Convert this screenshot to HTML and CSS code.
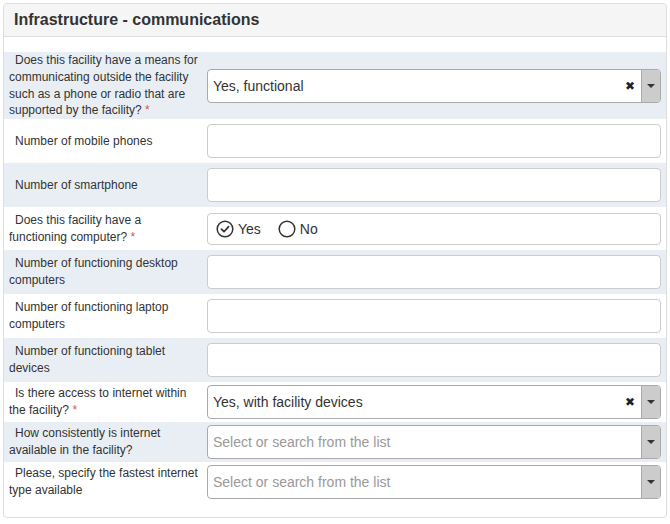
FILE: index.html
```html
<!DOCTYPE html>
<html>
<head>
<meta charset="utf-8">
<link rel="stylesheet" href="styles.css">
</head>
<body>
<div class="panel">
  <div class="panel-head">Infrastructure - communications</div>
  <div class="panel-body">
    <div class="row shaded r-tall">
      <div class="label">Does this facility have a means for communicating outside the facility such as a phone or radio that are supported by the facility? <span class="req">*</span></div>
      <div class="select">
        <span class="value">Yes, functional</span>
        <span class="clear">✖</span>
        <span class="arrow"><span class="tri"></span></span>
      </div>
    </div>
    <div class="row r-in">
      <div class="label">Number of mobile phones</div>
      <div class="input"></div>
    </div>
    <div class="row shaded r-in">
      <div class="label">Number of smartphone</div>
      <div class="input"></div>
    </div>
    <div class="row r-radio">
      <div class="label">Does this facility have a functioning computer? <span class="req">*</span></div>
      <div class="radios">
        <span class="opt">
          <svg width="18" height="18" viewBox="0 0 18 18"><circle cx="9" cy="9" r="7.8" fill="none" stroke="#333" stroke-width="1.5"/><path d="M5.4 9.2 L8 11.7 L12.6 6.6" fill="none" stroke="#333" stroke-width="1.7" stroke-linecap="round" stroke-linejoin="round"/></svg>
          Yes
        </span>
        <span class="opt">
          <svg width="18" height="18" viewBox="0 0 18 18"><circle cx="9" cy="9" r="7.8" fill="none" stroke="#333" stroke-width="1.5"/></svg>
          No
        </span>
      </div>
    </div>
    <div class="row shaded r-in">
      <div class="label">Number of functioning desktop computers</div>
      <div class="input"></div>
    </div>
    <div class="row r-in">
      <div class="label">Number of functioning laptop computers</div>
      <div class="input"></div>
    </div>
    <div class="row shaded r-in">
      <div class="label">Number of functioning tablet devices</div>
      <div class="input"></div>
    </div>
    <div class="row r-sel">
      <div class="label">Is there access to internet within the facility? <span class="req">*</span></div>
      <div class="select">
        <span class="value">Yes, with facility devices</span>
        <span class="clear">✖</span>
        <span class="arrow"><span class="tri"></span></span>
      </div>
    </div>
    <div class="row shaded r-sel">
      <div class="label">How consistently is internet available in the facility?</div>
      <div class="select">
        <span class="value ph">Select or search from the list</span>
        <span class="arrow"><span class="tri"></span></span>
      </div>
    </div>
    <div class="row r-sel">
      <div class="label">Please, specify the fastest internet type available</div>
      <div class="select">
        <span class="value ph">Select or search from the list</span>
        <span class="arrow"><span class="tri"></span></span>
      </div>
    </div>
  </div>
</div>
</body>
</html>
```

FILE: styles.css
```css
html, body {
  margin: 0;
  padding: 0;
  background: #fff;
}
body {
  font-family: "Liberation Sans", Arial, sans-serif;
  color: #333;
}
.panel {
  margin: 3px 3px 0 3px;
  width: 662px;
  border: 1px solid #ddd;
  border-radius: 4px;
  background: #fff;
}
.panel-head {
  background: #f5f5f5;
  border-bottom: 1px solid #ddd;
  border-radius: 3px 3px 0 0;
  height: 32px;
  line-height: 31px;
  padding-left: 10px;
  font-size: 16px;
  font-weight: bold;
  color: #333;
}
.panel-body {
  padding: 15px 0 15px 0;
}
.row {
  display: flex;
  align-items: center;
  padding-right: 5px;
}
.row.shaded {
  background: #e9eef5;
}
.r-tall { height: 67px; }
.r-in { height: 44px; }
.r-radio { height: 43px; }
.r-sel { height: 40px; }
.label {
  width: 189px;
  flex: none;
  padding-left: 5px;
  padding-right: 9px;
  font-size: 12px;
  line-height: 16.75px;
  text-indent: 6px;
  color: #333;
}
.req {
  color: #d9534f;
}
.input {
  flex: 1;
  height: 32px;
  border: 1px solid #ccc;
  border-radius: 4px;
  background: #fff;
}
.select {
  flex: 1;
  height: 32px;
  border: 1px solid #aaa;
  border-radius: 4px;
  background: #fff;
  display: flex;
  align-items: center;
  overflow: hidden;
}
.select .value {
  flex: 1;
  padding-left: 5px;
  font-size: 14px;
  color: #333;
}
.select .value.ph {
  color: #999;
}
.select .clear {
  font-size: 12px;
  font-weight: bold;
  color: #222;
  margin-right: 6px;
  font-family: "DejaVu Sans", sans-serif;
}
.select .arrow {
  width: 18px;
  height: 32px;
  background: #ccc;
  border-left: 1px solid #aaa;
  display: flex;
  align-items: center;
  justify-content: center;
}
.tri {
  width: 0;
  height: 0;
  border-left: 4px solid transparent;
  border-right: 4px solid transparent;
  border-top: 4px solid #333;
}
.radios {
  flex: 1;
  height: 30px;
  border: 1px solid #ccc;
  border-radius: 4px;
  background: #fff;
  display: flex;
  align-items: center;
  padding-left: 8px;
  gap: 17px;
  font-size: 14px;
}
.opt {
  display: flex;
  align-items: center;
  gap: 4px;
}
.opt svg {
  display: block;
}
```
